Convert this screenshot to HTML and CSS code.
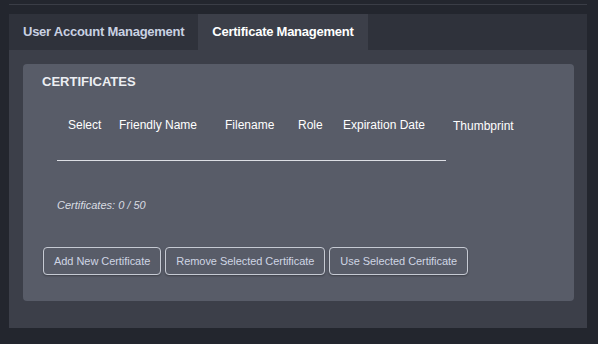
FILE: index.html
```html
<!DOCTYPE html>
<html lang="en">
<head>
  <meta charset="UTF-8" />
  <meta name="viewport" content="width=device-width, initial-scale=1.0" />
  <title>Certificate Management</title>
  <link rel="stylesheet" href="styles.css">
</head>
<body>

  <div class="page">
    <div class="top-line"></div>

    <div class="panel">
      <div class="tabs">
        <div class="tab">User Account Management</div>
        <div class="tab active">Certificate Management</div>
      </div>

      <div class="tab-body">
        <div class="card">
          <div class="card-title">CERTIFICATES</div>

          <div class="cert-table">
            <div class="cert-cols">
              <div class="th col-select">Select</div>
              <div class="th col-name">Friendly Name</div>
              <div class="th col-file">Filename</div>
              <div class="th col-role">Role</div>
              <div class="th col-exp">Expiration Date</div>
            </div>
            <div class="th col-thumb">Thumbprint</div>
          </div>

          <div class="cert-count">Certificates: <span id="cert-used">0</span> / <span id="cert-max">50</span></div>

          <div class="card-buttons">
            <button class="btn">Add New Certificate</button>
            <button class="btn">Remove Selected Certificate</button>
            <button class="btn">Use Selected Certificate</button>
          </div>
        </div>
      </div>
    </div>
  </div>

</body>
</html>
```

FILE: styles.css
```css
body {
  margin: 0;
  background: #23262e;
  font-family: "Liberation Sans", Arial, sans-serif;
  color: #fff;
}
.page {
  padding: 4px 11px 16px 9px;
}
.top-line {
  height: 9px;
  border-top: 1px solid #3a3d46;
}
.panel {
  background: #3c3f49;
}
.tabs {
  display: flex;
  height: 36px;
  background: #2f323b;
}
.tab {
  padding: 0 14px;
  line-height: 36px;
  font-size: 13px;
  font-weight: bold;
  letter-spacing: -0.25px;
  color: #c9d1e2;
}
.tab.active {
  background: #3c3f49;
  color: #fff;
}
.tab-body {
  padding: 14px 13px 27px 14px;
}
.card {
  background: #585c68;
  border-radius: 4px;
  padding: 10px 0 26px;
}
.card-title {
  padding-left: 19px;
  font-size: 13px;
  line-height: 15px;
  font-weight: bold;
  color: #eceef2;
}
.cert-table {
  display: flex;
  margin: 29px 0 0 34px;
}
.cert-cols {
  display: flex;
  width: 389px;
  border-bottom: 1px solid #dcdee4;
}
.th {
  font-size: 12px;
  line-height: 14px;
  padding: 0 0 28px 11px;
  color: #fff;
  box-sizing: border-box;
}
.col-select { width: 51px; }
.col-name { width: 106px; }
.col-file { width: 73px; }
.col-role { width: 45px; }
.col-exp { width: 114px; }
.col-thumb {
  padding-left: 7px;
  padding-top: 1px;
}
.cert-count {
  margin: 38px 0 0 34px;
  font-size: 11px;
  line-height: 13px;
  font-style: italic;
  color: #d9dce3;
}
.card-buttons {
  display: flex;
  gap: 4px;
  margin: 35px 0 0 20px;
}
.btn {
  background: transparent;
  border: 1px solid #c6cad3;
  border-radius: 4px;
  padding: 6px 10px;
  font-family: "Liberation Sans", Arial, sans-serif;
  font-size: 11px;
  line-height: 14px;
  letter-spacing: -0.05px;
  color: #cfd5e4;
  box-shadow: 0 1px 2px rgba(0, 0, 0, 0.3);
  cursor: pointer;
}
```
